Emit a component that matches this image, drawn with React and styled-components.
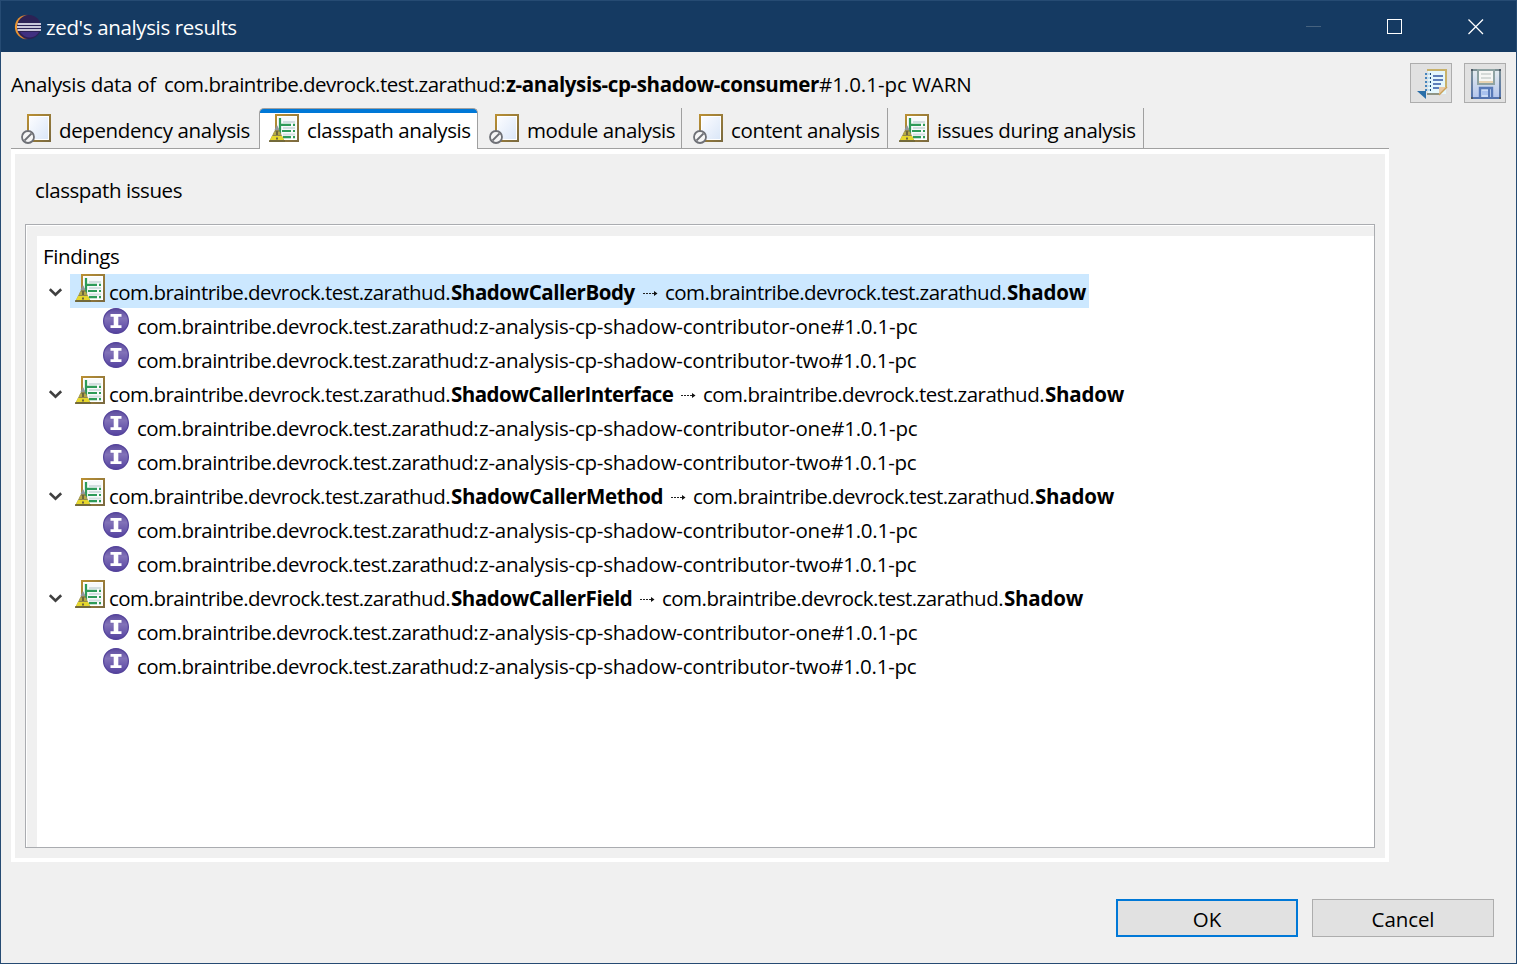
import React from "react";
import styled, { createGlobalStyle } from "styled-components";

const Global = createGlobalStyle`
  * { box-sizing: border-box; }
  body { margin: 0; overflow: hidden; }
  svg { display: block; flex: none; }
`;

const Dialog = styled.div`
  width: 1517px;
  height: 964px;
  display: flex;
  flex-direction: column;
  background: #f0f0f0;
  border: 1px solid #264b73;
  color: #000;
  font: 20.5px/34px "Open Sans", "Noto Sans", sans-serif;
  white-space: pre;
`;

const TitleBar = styled.header`
  height: 51px;
  flex: none;
  display: flex;
  align-items: center;
  padding: 0 32px 0 13px;
  background: #153a62;
  color: #fff;
`;
const Title = styled.div`
  flex: 1;
  padding: 1px 0 0 4px;
`;
const WindowControls = styled.div`
  display: flex;
  gap: 65px;
`;

const Heading = styled.div`
  display: flex;
  justify-content: space-between;
  height: 56px;
  padding: 11px 10px 0;
`;
const Summary = styled.div`
  padding-top: 4px;
`;
const Tools = styled.div`
  display: flex;
  gap: 12px;
`;
const ToolButton = styled.button`
  width: 42px;
  height: 40px;
  padding: 2px 0 0 2px;
  display: flex;
  align-items: center;
  justify-content: center;
  background: #e1e1e1;
  border: 1px solid #adadad;
`;

const Label = styled.span`
  display: inline-block;
  width: ${(p) => (p.$w ? p.$w + "px" : "auto")};
  letter-spacing: ${(p) => p.$ls ?? -0.38}px;
  font-weight: ${(p) => (p.$bold ? 700 : 400)};
`;

const TabBar = styled.nav`
  display: flex;
  width: 1378px;
  height: 41px;
  margin-left: 10px;
  border-bottom: 1px solid #a0a0a0;
`;
const Tab = styled.div`
  width: ${(p) => p.$w}px;
  height: ${(p) => (p.$active ? 41 : 40)}px;
  display: flex;
  padding: 6px 0 0 ${(p) => p.$pad || 10}px;
  border-right: ${(p) => (p.$line ? "1px solid #a0a0a0" : "0")};
  ${(p) =>
    p.$active &&
    `
    background: linear-gradient(#0078d7 0 4px, #fff 4px);
    border: 1px solid #a0a0a0;
    border-bottom: 0;
    border-radius: 5px 5px 0 0;
    padding: 5px 0 0 9px;
  `}
`;
const TabLabel = styled.div`
  padding-left: 8px;
  margin-top: -1px;
`;

const Pane = styled.main`
  width: 1378px;
  height: 713px;
  margin-left: 10px;
  padding: 19px 10px 10px;
  border: 4px solid #fff;
  border-top-width: 5px;
`;
const PaneTitle = styled.div`
  height: 51px;
  padding-left: 10px;
`;
const Group = styled.section`
  height: 624px;
  border: 1px solid #aaacb0;
  padding: 11px 0 0 11px;
  box-shadow: inset 1px 1px #fff;
`;
const Tree = styled.div`
  height: 611px;
  background: #fff;
  padding-top: 3px;
`;
const TreeHeader = styled.div`
  height: 35px;
  padding-left: 6px;
`;
const Row = styled.div`
  display: flex;
  height: 34px;
  padding-left: ${(p) => (p.$child ? 66 : 12)}px;
`;
const Toggle = styled.div`
  width: 21px;
  padding-top: 14px;
`;
const RowBody = styled.div`
  display: flex;
  height: 34px;
  padding: 0 3px 0 ${(p) => (p.$child ? 0 : 5)}px;
  background: ${(p) => (p.$selected ? "#cce8ff" : "transparent")};
`;
const RowText = styled.div`
  display: flex;
  padding: 1px 0 0 ${(p) => (p.$child ? 8 : 4)}px;
`;
const Arrow = styled.div`
  width: 30px;
  padding: 14px 0 0 8px;
`;

const Footer = styled.footer`
  display: flex;
  justify-content: flex-end;
  gap: 14px;
  padding: 37px 22px 0 0;
`;
const Button = styled.button`
  width: 182px;
  height: 38px;
  padding: 2px 0 0;
  font: inherit;
  line-height: 32px;
  color: #000;
  background: #e1e1e1;
  border: ${(p) => (p.$primary ? "2px solid #0078d7" : "1px solid #adadad")};
`;

const EclipseLogo = () => (
  <svg width="28" height="26" viewBox="0 0 28 26">
    <defs>
      <linearGradient id="rim">
        <stop stopColor="#f29a2e" />
        <stop offset=".3" stopColor="#d98432" />
        <stop offset=".55" stopColor="#2c2255" />
      </linearGradient>
    </defs>
    <circle cx="13.200" cy="13" r="12.300" fill="url(#rim)" />
    <circle cx="15" cy="13" r="12" fill="#2c2255" />
    <path d="M6 18h19q-3 5-9 5.500q-6 0-10-5.500z" fill="#413080" />
    <path d="M3.500 10h23.500M3 13h24M3.500 16h23.500" stroke="#c9c6d8" strokeWidth="2" />
  </svg>
);

const PageFrame = () => (
  <>
    <defs>
      <linearGradient id="frame" x2="1" y2="1">
        <stop stopColor="#b98f33" />
        <stop offset="1" stopColor="#7b6a3f" />
      </linearGradient>
      <linearGradient id="sheet" x2="1" y2="1">
        <stop stopColor="#fbfcff" />
        <stop offset="1" stopColor="#dbe7f8" />
      </linearGradient>
    </defs>
    <rect x="7" y="1" width="22" height="26" fill="#fff" stroke="url(#frame)" strokeWidth="2" />
  </>
);

const EmptyIcon = () => (
  <svg width="30" height="30" viewBox="0 0 30 30">
    <PageFrame />
    <rect x="9" y="3" width="18" height="22" fill="url(#sheet)" />
    <circle cx="7" cy="23" r="6" fill="#f6f6f6" stroke="#6e7076" strokeWidth="1.800" />
    <path d="M3.500 26.500L10.500 19.500" stroke="#6e7076" strokeWidth="1.800" />
  </svg>
);

const IssueIcon = () => (
  <svg width="30" height="30" viewBox="0 0 30 30">
    <PageFrame />
    <rect x="9" y="3" width="18" height="22" fill="#f7fafa" />
    <path d="M14 8h12M14 14h12M14 20.500h12" stroke="#d3dfe0" strokeWidth="2" />
    <path d="M11 4V22M11 10.800h11M13 17h9M14 23.200h8M24 10.800h2M24 17h2M24 23.200h2" stroke="#2e9b58" strokeWidth="2.200" fill="none" />
    <path d="M8 12L16 28H0z" fill="#91874c" />
    <path d="M5 18h6l1 3H4z" fill="#b5aa45" />
    <path d="M3 22h10l2 4H1z" fill="#e6d72c" />
    <path d="M0 27h16" stroke="#6a6035" strokeWidth="1.500" />
    <path d="M8 17v4M8 23.500v2" stroke="#6d663c" strokeWidth="2" />
    <path d="M5.500 16l2.500-5 2.500 5z" fill="#92959a" />
  </svg>
);

const InfoIcon = () => (
  <svg width="26" height="26" viewBox="0 0 26 26">
    <defs>
      <linearGradient id="ball" x2="0" y2="1">
        <stop stopColor="#5b4a9d" />
        <stop offset=".4" stopColor="#8272b8" />
        <stop offset="1" stopColor="#5442a0" />
      </linearGradient>
    </defs>
    <circle cx="13" cy="13" r="12.400" fill="url(#ball)" stroke="#54439b" strokeWidth="1.200" />
    <path d="M7.500 6h11v2.700h-3.200v8.600h3.200V20h-11v-2.700h3.200V8.700H7.500z" fill="#fff" />
  </svg>
);

const Chevron = () => (
  <svg width="14" height="9" viewBox="0 0 14 9">
    <path d="M.8 1.200L6.500 6.800l5.700-5.600" stroke="#404040" strokeWidth="2.600" fill="none" />
  </svg>
);

const DashedArrow = () => (
  <svg width="16" height="9" viewBox="0 0 16 9">
    <path d="M0 4.500h11" stroke="#222" strokeWidth="1.100" strokeDasharray="2 1" />
    <path d="M11 2l3.500 2.500-3.500 2.500z" fill="#111" />
  </svg>
);

const NotesIcon = () => (
  <svg width="32" height="30" viewBox="0 0 32 30">
    <rect x="12" y="2" width="18" height="23" fill="#e4f7fd" />
    <path d="M11 0h20v18h-2V2H11z" fill="#c9b26a" />
    <path d="M11 24h12v2H11z" fill="#8f9484" />
    <path d="M23 18h8l-8 8z" fill="#e9c9a4" />
    <path d="M31 18l-8 8" stroke="#c9a25a" strokeWidth="1.500" />
    <path d="M17 7h10M17 11h10M17 15h8M17 19h6" stroke="#5f7fb9" strokeWidth="2" />
    <path d="M9 5h6M9 9h6M9 13h6M9 17h6M9 21h6" stroke="#4684bb" strokeWidth="2" />
    <path d="M11 5h3M11 9h3M11 13h3M11 17h3M11 21h3" stroke="#c5dcec" strokeWidth="2" />
    <path d="M14 5h1M14 9h1M14 13h1M14 17h1M14 21h1" stroke="#1d4772" strokeWidth="2" />
    <path d="M1 22h9v8z" fill="#2a6ea8" />
  </svg>
);

const SaveIcon = () => (
  <svg width="30" height="30" viewBox="0 0 30 30">
    <defs>
      <linearGradient id="disk" x2="0" y2="1">
        <stop stopColor="#e4ebee" />
        <stop offset="1" stopColor="#b4c6ec" />
      </linearGradient>
      <linearGradient id="diskEdge" x2="0" y2="1">
        <stop stopColor="#7d9094" />
        <stop offset="1" stopColor="#5373ae" />
      </linearGradient>
    </defs>
    <rect x="1" y="1" width="28" height="28" fill="url(#disk)" stroke="url(#diskEdge)" strokeWidth="2" />
    <rect x="7" y="1" width="16" height="14" fill="#f6f7f5" stroke="#8fa3a3" strokeWidth="2" />
    <path d="M10 5h10M10 9h10" stroke="#d5dad8" strokeWidth="2" />
    <path d="M8 13h14" stroke="#e8d3b2" strokeWidth="2" />
    <path d="M9 28V19h12v9" fill="#cbdcf6" stroke="#587ab8" strokeWidth="2.400" />
    <rect x="11" y="22" width="6" height="4" fill="#a9c2ee" />
    <path d="M18 20v8" stroke="#587ab8" strokeWidth="2" />
    <path d="M0 0h2v2H0zM28 0h2v2h-2zM0 28h2v2H0zM28 28h2v2h-2z" fill="#4d5a66" />
  </svg>
);

const PACKAGE = "com.braintribe.devrock.test.zarathud";

const PackageName = ({ end }) => (
  <Label $w={342} $ls={-0.52}>{PACKAGE + end}</Label>
);

const findings = [
  { name: "ShadowCallerBody", width: 184, spacing: -0.44, selected: true },
  { name: "ShadowCallerInterface", width: 222, spacing: -0.52 },
  { name: "ShadowCallerMethod", width: 212, spacing: -0.39 },
  { name: "ShadowCallerField", width: 181, spacing: -0.43 },
];

const Finding = ({ name, width, spacing, selected }) => (
  <>
    <Row>
      <Toggle><Chevron /></Toggle>
      <RowBody $selected={selected}>
        <IssueIcon />
        <RowText>
          <PackageName end="." />
          <Label $bold $w={width} $ls={spacing}>{name}</Label>
          <Arrow><DashedArrow /></Arrow>
          <PackageName end="." />
          <Label $bold $w={79} $ls={-0.2}>Shadow</Label>
        </RowText>
      </RowBody>
    </Row>
    {["one", "two"].map((n) => (
      <Row $child key={n}>
        <RowBody $child>
          <InfoIcon />
          <RowText $child>
            <PackageName end=":" />
            <Label $ls={-0.22}>{"z-analysis-cp-shadow-contributor-" + n + "#1.0.1-pc"}</Label>
          </RowText>
        </RowBody>
      </Row>
    ))}
  </>
);

export default function App() {
  return (
    <Dialog>
      <Global />
      <TitleBar>
        <EclipseLogo />
        <Title><Label $ls={-0.354}>zed's analysis results</Label></Title>
        <WindowControls>
          <svg width="16" height="16"><path d="M0 7.500h15" stroke="#46627f" /></svg>
          <svg width="16" height="16"><rect x=".5" y=".5" width="14" height="14" fill="none" stroke="#fff" /></svg>
          <svg width="16" height="16"><path d="M.5.500l14.500 14.500M15 .500L.5 15" stroke="#fff" strokeWidth="1.300" /></svg>
        </WindowControls>
      </TitleBar>
      <Heading>
        <Summary>
          <Label $w={153} $ls={-0.3}>Analysis data of </Label>
          <PackageName end=":" />
          <Label $bold $w={313} $ls={-0.38}>z-analysis-cp-shadow-consumer</Label>
          <Label $ls={-0.05}>#1.0.1-pc WARN</Label>
        </Summary>
        <Tools>
          <ToolButton><NotesIcon /></ToolButton>
          <ToolButton><SaveIcon /></ToolButton>
        </Tools>
      </Heading>
      <TabBar>
        <Tab $w={248}><EmptyIcon /><TabLabel><Label>dependency analysis</Label></TabLabel></Tab>
        <Tab $w={219} $active><IssueIcon /><TabLabel><Label>classpath analysis</Label></TabLabel></Tab>
        <Tab $w={204} $line $pad={11}><EmptyIcon /><TabLabel><Label>module analysis</Label></TabLabel></Tab>
        <Tab $w={206} $line $pad={11}><EmptyIcon /><TabLabel><Label $ls={-0.354}>content analysis</Label></TabLabel></Tab>
        <Tab $w={256} $line $pad={11}><IssueIcon /><TabLabel><Label>issues during analysis</Label></TabLabel></Tab>
      </TabBar>
      <Pane>
        <PaneTitle><Label $ls={-0.41}>classpath issues</Label></PaneTitle>
        <Group>
          <Tree>
            <TreeHeader><Label>Findings</Label></TreeHeader>
            {findings.map((f) => <Finding key={f.name} {...f} />)}
          </Tree>
        </Group>
      </Pane>
      <Footer>
        <Button $primary><Label $ls={0}>OK</Label></Button>
        <Button><Label $ls={-0.1}>Cancel</Label></Button>
      </Footer>
    </Dialog>
  );
}
